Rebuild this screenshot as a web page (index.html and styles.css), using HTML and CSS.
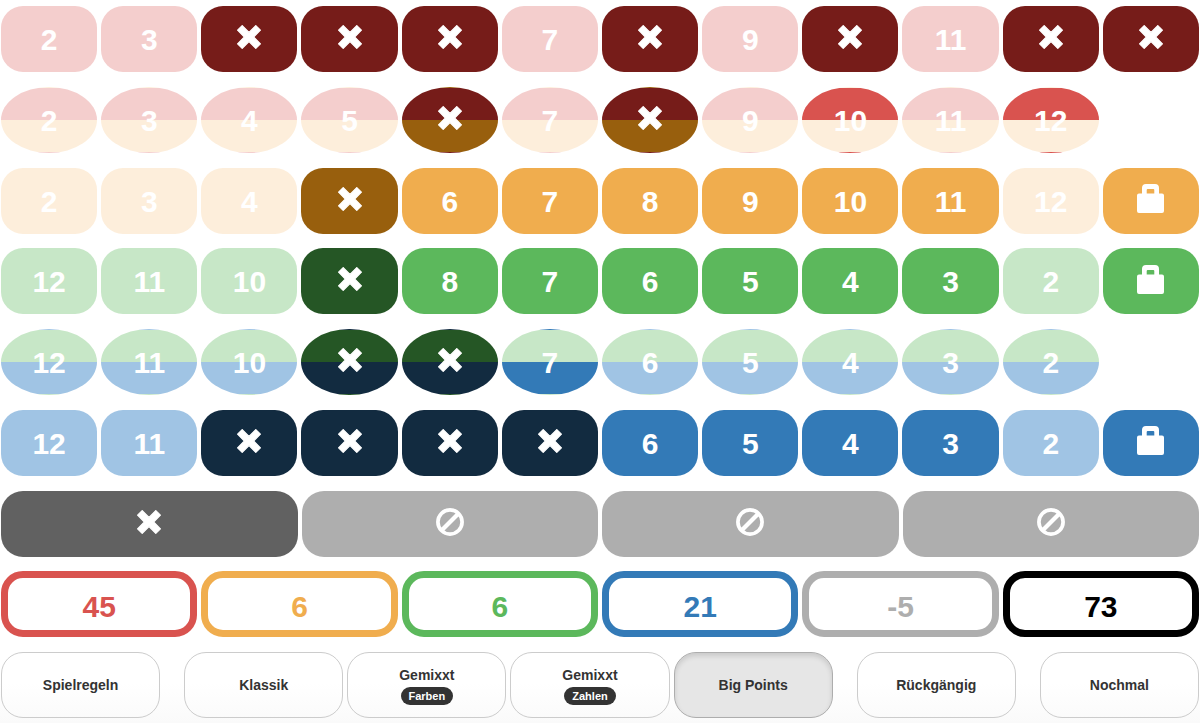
FILE: index.html
```html
<!DOCTYPE html>
<html lang="de">
<head>
<meta charset="utf-8">
<meta name="viewport" content="width=device-width, initial-scale=1">
<title>Big Points</title>
<link rel="stylesheet" href="styles.css">
</head>
<body>
<svg class="sprite" aria-hidden="true">
  <symbol id="cross" viewBox="0 0 24 24"><path d="M5.200.6 12 7.400 18.800.6 23.400 5.200 16.600 12 23.400 18.800 18.800 23.400 12 16.600 5.200 23.400.6 18.800 7.400 12 .6 5.200Z" fill="currentColor" stroke="currentColor" stroke-width="1.200" stroke-linejoin="round"/></symbol>
  <symbol id="lock" viewBox="0 0 27 29"><path fill-rule="evenodd" fill="currentColor" d="M5 9.500V4a4 4 0 0 1 4-4h9a4 4 0 0 1 4 4v5.500h3a2 2 0 0 1 2 2v15.500a2 2 0 0 1-2 2h-23a2 2 0 0 1-2-2V11.500a2 2 0 0 1 2-2ZM9.700 9.500h7.600V6a1 1 0 0 0-1-1h-5.600a1 1 0 0 0-1 1Z"/></symbol>
  <symbol id="ban" viewBox="0 0 28 28"><g fill="none" stroke="currentColor" stroke-width="3.700"><circle cx="14" cy="14" r="12.100"/><path d="M5.500 22.500 22.500 5.500" stroke-width="4.200"/></g></symbol>
</svg>
<main class="board">
  <div class="row fields red">
    <button class="cell off" disabled>2</button>
    <button class="cell off" disabled>3</button>
    <button class="cell hit" aria-label="4"><svg class="cross"><use href="#cross"/></svg></button>
    <button class="cell hit" aria-label="5"><svg class="cross"><use href="#cross"/></svg></button>
    <button class="cell hit" aria-label="6"><svg class="cross"><use href="#cross"/></svg></button>
    <button class="cell off" disabled>7</button>
    <button class="cell hit" aria-label="8"><svg class="cross"><use href="#cross"/></svg></button>
    <button class="cell off" disabled>9</button>
    <button class="cell hit" aria-label="10"><svg class="cross"><use href="#cross"/></svg></button>
    <button class="cell off" disabled>11</button>
    <button class="cell hit" aria-label="12"><svg class="cross"><use href="#cross"/></svg></button>
    <button class="cell hit" aria-label="Schloss"><svg class="cross"><use href="#cross"/></svg></button>
  </div>
  <div class="row fields red-yellow">
    <button class="cell oval off" disabled>2</button>
    <button class="cell oval off" disabled>3</button>
    <button class="cell oval off" disabled>4</button>
    <button class="cell oval off" disabled>5</button>
    <button class="cell oval hit" aria-label="6"><svg class="cross"><use href="#cross"/></svg></button>
    <button class="cell oval off" disabled>7</button>
    <button class="cell oval hit" aria-label="8"><svg class="cross"><use href="#cross"/></svg></button>
    <button class="cell oval off" disabled>9</button>
    <button class="cell oval top-on">10</button>
    <button class="cell oval off" disabled>11</button>
    <button class="cell oval top-on">12</button>
  </div>
  <div class="row fields yellow">
    <button class="cell off" disabled>2</button>
    <button class="cell off" disabled>3</button>
    <button class="cell off" disabled>4</button>
    <button class="cell hit" aria-label="5"><svg class="cross"><use href="#cross"/></svg></button>
    <button class="cell">6</button>
    <button class="cell">7</button>
    <button class="cell">8</button>
    <button class="cell">9</button>
    <button class="cell">10</button>
    <button class="cell">11</button>
    <button class="cell off" disabled>12</button>
    <button class="cell" aria-label="Schloss"><svg class="lock"><use href="#lock"/></svg></button>
  </div>
  <div class="row fields green">
    <button class="cell off" disabled>12</button>
    <button class="cell off" disabled>11</button>
    <button class="cell off" disabled>10</button>
    <button class="cell hit" aria-label="9"><svg class="cross"><use href="#cross"/></svg></button>
    <button class="cell">8</button>
    <button class="cell">7</button>
    <button class="cell">6</button>
    <button class="cell">5</button>
    <button class="cell">4</button>
    <button class="cell">3</button>
    <button class="cell off" disabled>2</button>
    <button class="cell" aria-label="Schloss"><svg class="lock"><use href="#lock"/></svg></button>
  </div>
  <div class="row fields green-blue">
    <button class="cell oval off" disabled>12</button>
    <button class="cell oval off" disabled>11</button>
    <button class="cell oval off" disabled>10</button>
    <button class="cell oval hit" aria-label="9"><svg class="cross"><use href="#cross"/></svg></button>
    <button class="cell oval hit" aria-label="8"><svg class="cross"><use href="#cross"/></svg></button>
    <button class="cell oval bottom-on">7</button>
    <button class="cell oval off" disabled>6</button>
    <button class="cell oval off" disabled>5</button>
    <button class="cell oval off" disabled>4</button>
    <button class="cell oval off" disabled>3</button>
    <button class="cell oval off" disabled>2</button>
  </div>
  <div class="row fields blue">
    <button class="cell off" disabled>12</button>
    <button class="cell off" disabled>11</button>
    <button class="cell hit" aria-label="10"><svg class="cross"><use href="#cross"/></svg></button>
    <button class="cell hit" aria-label="9"><svg class="cross"><use href="#cross"/></svg></button>
    <button class="cell hit" aria-label="8"><svg class="cross"><use href="#cross"/></svg></button>
    <button class="cell hit" aria-label="7"><svg class="cross"><use href="#cross"/></svg></button>
    <button class="cell">6</button>
    <button class="cell">5</button>
    <button class="cell">4</button>
    <button class="cell">3</button>
    <button class="cell off" disabled>2</button>
    <button class="cell" aria-label="Schloss"><svg class="lock"><use href="#lock"/></svg></button>
  </div>
  <div class="row misses gray">
    <button class="cell hit" aria-label="Fehlwurf 1"><svg class="cross"><use href="#cross"/></svg></button>
    <button class="cell" aria-label="Fehlwurf 2"><svg class="ban"><use href="#ban"/></svg></button>
    <button class="cell" aria-label="Fehlwurf 3"><svg class="ban"><use href="#ban"/></svg></button>
    <button class="cell" aria-label="Fehlwurf 4"><svg class="ban"><use href="#ban"/></svg></button>
  </div>
  <div class="row scores">
    <output class="score red">45</output>
    <output class="score yellow">6</output>
    <output class="score green">6</output>
    <output class="score blue">21</output>
    <output class="score gray">-5</output>
    <output class="score black">73</output>
  </div>
  <nav class="row menu">
    <button class="option">Spielregeln</button>
    <button class="option apart">Klassik</button>
    <button class="option">Gemixxt<span class="badge">Farben</span></button>
    <button class="option">Gemixxt<span class="badge">Zahlen</span></button>
    <button class="option active" aria-pressed="true">Big Points</button>
    <button class="option apart">Rückgängig</button>
    <button class="option apart">Nochmal</button>
  </nav>
</main>
</body>
</html>
```

FILE: styles.css
```css
* {
  box-sizing: border-box;
}

body {
  margin: 0;
  background: #fff;
  font-family: "Helvetica Neue", Helvetica, "Liberation Sans", Arial, sans-serif;
  font-weight: bold;
  color: #333;
}

.sprite {
  display: none;
}

.board {
  display: flex;
  flex-direction: column;
  justify-content: space-between;
  gap: 8px;
  min-height: 100vh;
  padding: 6px 1px 5px;
  background: linear-gradient(to top, #fafafa, #fff 40px);
}

.row {
  display: grid;
  gap: 4px;
}

.fields {
  grid-template-columns: repeat(12, 1fr);
}

.misses {
  grid-template-columns: repeat(4, 1fr);
}

.scores {
  grid-template-columns: repeat(6, 1fr);
}

.menu {
  display: flex;
}

.red {
  --on: #d9534f;
  --off: #f4cecd;
  --hit: #761c19;
}

.yellow {
  --on: #f0ad4e;
  --off: #fdeedb;
  --hit: #985f0d;
}

.green {
  --on: #5cb85c;
  --off: #c7e7c7;
  --hit: #255625;
}

.blue {
  --on: #337ab7;
  --off: #a0c4e4;
  --hit: #122b40;
}

.gray {
  --on: #aeaeae;
  --hit: #616161;
}

.black {
  --on: #000;
}

.red-yellow {
  --top-on: #d9534f;
  --top-off: #f4cecd;
  --top-hit: #761c19;
  --bottom-on: #f0ad4e;
  --bottom-off: #fdeedb;
  --bottom-hit: #985f0d;
}

.green-blue {
  --top-on: #5cb85c;
  --top-off: #c7e7c7;
  --top-hit: #255625;
  --bottom-on: #337ab7;
  --bottom-off: #a0c4e4;
  --bottom-hit: #122b40;
}

.cell,
.score {
  display: flex;
  align-items: center;
  justify-content: center;
  height: 66px;
  min-width: 0;
  border-radius: 22px;
  font: inherit;
  font-size: 30px;
  line-height: 40px;
}

.cell {
  padding: 2px 0 0;
  border: 1px solid transparent;
  background-color: var(--on);
  color: #fff;
}

.cell.off {
  background-color: var(--off);
}

.cell.hit {
  background-color: var(--hit);
}

.cell.oval {
  border-radius: 50%;
  background: linear-gradient(var(--upper) 50%, var(--lower) 50%);
}

.oval.off {
  --upper: var(--top-off);
  --lower: var(--bottom-off);
}

.oval.hit {
  --upper: var(--top-hit);
  --lower: var(--bottom-hit);
}

.oval.top-on {
  --upper: var(--top-on);
  --lower: var(--bottom-off);
}

.oval.bottom-on {
  --upper: var(--top-off);
  --lower: var(--bottom-on);
}

.cell svg {
  display: block;
  margin-bottom: 6px;
}

.cross {
  width: 24px;
  height: 24px;
}

.lock {
  width: 27px;
  height: 29px;
}

.ban {
  width: 28px;
  height: 28px;
}

.score {
  padding-top: 6px;
  border: 7px solid var(--on);
  background: #fff;
  color: var(--on);
}

.option {
  display: flex;
  flex: 1 1 0;
  flex-direction: column;
  align-items: center;
  justify-content: center;
  gap: 2px;
  height: 66px;
  min-width: 0;
  padding: 0;
  border: 1px solid #ccc;
  border-radius: 22px;
  background: transparent;
  color: #333;
  font: inherit;
  font-size: 14px;
  line-height: 20px;
}

.option.apart {
  margin-left: 20px;
}

.option.active {
  border-color: #adadad;
  background: #e6e6e6;
  box-shadow: inset 0 3px 5px rgba(0, 0, 0, 0.125);
}

.badge {
  padding: 0 8px;
  border-radius: 9px;
  background: #333;
  color: #fff;
  font-size: 11px;
  line-height: 18px;
}
```
